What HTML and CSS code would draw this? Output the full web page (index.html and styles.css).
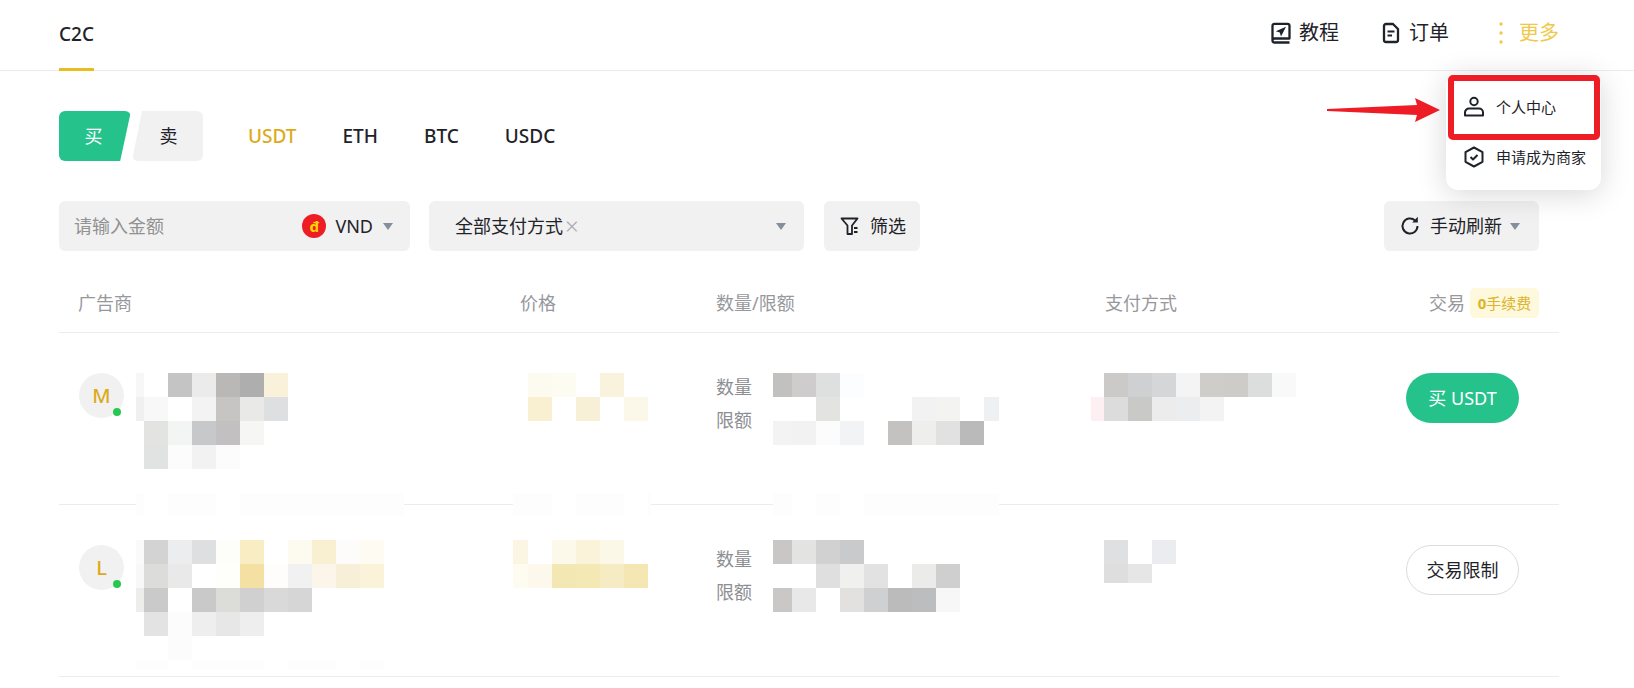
FILE: index.html
```html
<!DOCTYPE html>
<html lang="zh-CN">
<head>
<meta charset="UTF-8">
<title>C2C</title>
<link rel="stylesheet" href="styles.css">
</head>
<body>
<div class="page">
	<header class="topbar">
		<div class="topbar-title">C2C</div>
		<nav class="topbar-nav">
			<a class="nav-item">
				<svg class="icon-24" viewBox="0 0 24 24"><path class="line heavy" d="M3.500 19.500V4.800a2 2 0 0 1 2-2h13a2 2 0 0 1 2 2v12.700h-15a2 2 0 0 0-2 2zm0 0a2 2 0 0 0 2 2h15"/><path class="solid" d="M17 5.800 6.800 10.300l4 1.200 1.200 4z"/></svg>
				<span>教程</span>
			</a>
			<a class="nav-item">
				<svg class="icon-24" viewBox="0 0 24 24"><path class="line heavy" d="M5 5a2 2 0 0 1 2-2h7l5 5v11a2 2 0 0 1-2 2H7a2 2 0 0 1-2-2z"/><path class="line" d="M8.500 10.500h7M8.500 14.500h4.500"/></svg>
				<span>订单</span>
			</a>
			<a class="nav-item nav-more">
				<svg class="icon-24" viewBox="0 0 24 24"><circle class="dot" cx="12" cy="3" r="1.700"/><circle class="dot" cx="12" cy="12" r="1.700"/><circle class="dot" cx="12" cy="21" r="1.700"/></svg>
				<span>更多</span>
			</a>
		</nav>
	</header>

	<div class="trade-tabs">
		<div class="side-tabs">
			<a class="side-buy">买</a>
			<a class="side-sell">卖</a>
		</div>
		<div class="coin-tabs">
			<a class="coin-active">USDT</a>
			<a>ETH</a>
			<a>BTC</a>
			<a>USDC</a>
		</div>
	</div>

	<div class="filters">
		<div class="field field-amount">
			<span class="placeholder">请输入金额</span>
			<span class="flag">đ</span>
			<span class="currency">VND</span>
			<i class="caret"></i>
		</div>
		<div class="field field-pay">
			<span>全部支付方式</span>
			<span class="clear">×</span>
			<i class="caret caret-end"></i>
		</div>
		<div class="field field-filter">
			<svg class="icon-20" viewBox="0 0 20 20"><path class="line thin" d="M1.500 2.500h16L12 9.500v8.500H7.500V9.500z"/><path class="line thin" d="M14 12h3.500M14 16h3.500"/></svg>
			<span>筛选</span>
		</div>
		<div class="field field-refresh">
			<svg class="icon-24" viewBox="0 0 24 24"><path class="line" d="M19.500 12a7.500 7.500 0 1 1-2.400-5.500"/><path class="solid" d="M19.800 2.800v5.600h-5.600z"/></svg>
			<span>手动刷新</span>
			<i class="caret"></i>
		</div>
	</div>

	<div class="table">
		<div class="table-head">
			<div>广告商</div>
			<div>价格</div>
			<div>数量/限额</div>
			<div>支付方式</div>
			<div class="head-trade">
				<span>交易</span>
				<span class="fee-badge"><b>0</b>手续费</span>
			</div>
		</div>

		<div class="table-row">
			<div><div class="avatar">M</div></div>
			<div></div>
			<div class="amount"><div>数量</div><div>限额</div></div>
			<div></div>
			<div class="trade-cell"><a class="trade-btn trade-buy">买 USDT</a></div>
		</div>

		<div class="table-row">
			<div><div class="avatar">L</div></div>
			<div></div>
			<div class="amount"><div>数量</div><div>限额</div></div>
			<div></div>
			<div class="trade-cell"><a class="trade-btn trade-limit">交易限制</a></div>
		</div>
	</div>

	<div class="more-menu">
		<a class="menu-item">
			<svg class="icon-24" viewBox="0 0 24 24"><circle class="line" cx="12" cy="6.500" r="3.700"/><path class="line" d="M7 13.500h10a4 4 0 0 1 4 4V20.500H3v-3a4 4 0 0 1 4-4z"/></svg>
			<span>个人中心</span>
		</a>
		<a class="menu-item">
			<svg class="icon-24" viewBox="0 0 24 24"><path class="line" d="M12 2.500 20.500 7.200v9.600L12 21.500l-8.500-4.700V7.200z"/><path class="line" d="m8.500 12 2.500 2.500 4.500-4.500"/></svg>
			<span>申请成为商家</span>
		</a>
	</div>

	<!-- mosaic over the private data, plus the red marks on top of the screenshot -->
	<svg class="overlay" width="1634" height="688" viewBox="0 0 1634 688">
		<!-- row 1 advertiser -->
		<rect x="136" y="373" width="8" height="24" fill="#f7f7f7"/>
		<rect class="c" x="168" y="373" fill="#c4c4c4"/>
		<rect class="c" x="192" y="373" fill="#ebebeb"/>
		<rect class="c" x="216" y="373" fill="#b9b8b6"/>
		<rect class="c" x="240" y="373" fill="#aeaeae"/>
		<rect class="c" x="264" y="373" fill="#f9f1da"/>
		<rect x="136" y="397" width="8" height="24" fill="#f0f0f0"/>
		<rect class="c" x="144" y="397" fill="#f8f8f8"/>
		<rect class="c" x="192" y="397" fill="#f3f3f3"/>
		<rect class="c" x="216" y="397" fill="#c6c5c3"/>
		<rect class="c" x="240" y="397" fill="#e9e9e7"/>
		<rect class="c" x="264" y="397" fill="#dedfe0"/>
		<rect class="c" x="144" y="421" fill="#e3e3e1"/>
		<rect class="c" x="168" y="421" fill="#f3f5f4"/>
		<rect class="c" x="192" y="421" fill="#c7c8ca"/>
		<rect class="c" x="216" y="421" fill="#c2c0c1"/>
		<rect class="c" x="240" y="421" fill="#f6f6f4"/>
		<rect class="c" x="144" y="445" fill="#e1e3e2"/>
		<rect class="c" x="168" y="445" fill="#fcfcfc"/>
		<rect class="c" x="192" y="445" fill="#f2f2f2"/>
		<rect class="c" x="216" y="445" fill="#fbfcfb"/>
		<!-- row 1 price -->
		<rect class="c" x="528" y="373" fill="#fdfaf0"/>
		<rect class="c" x="552" y="373" fill="#fdfcf2"/>
		<rect class="c" x="600" y="373" fill="#f9f2dd"/>
		<rect class="c" x="528" y="397" fill="#f8f0d0"/>
		<rect class="c" x="576" y="397" fill="#f7f0d7"/>
		<rect class="c" x="624" y="397" fill="#fbf8e9"/>
		<!-- row 1 amount -->
		<rect x="773" y="373" width="19" height="24" fill="#c1c2c0"/>
		<rect class="c" x="792" y="373" fill="#cecccd"/>
		<rect class="c" x="816" y="373" fill="#dee0df"/>
		<rect class="c" x="840" y="373" fill="#fcfdff"/>
		<rect class="c" x="816" y="397" fill="#e3e3e1"/>
		<rect class="c" x="912" y="397" fill="#f2f2f2"/>
		<rect class="c" x="936" y="397" fill="#f3f3f1"/>
		<rect x="984" y="397" width="15" height="24" fill="#eff0f2"/>
		<rect x="773" y="421" width="19" height="24" fill="#f3f3f3"/>
		<rect class="c" x="792" y="421" fill="#f1f2f1"/>
		<rect class="c" x="816" y="421" fill="#fcfcfc"/>
		<rect class="c" x="840" y="421" fill="#f2f3f5"/>
		<rect class="c" x="888" y="421" fill="#c3c2c0"/>
		<rect class="c" x="912" y="421" fill="#eeeeec"/>
		<rect class="c" x="936" y="421" fill="#e1e1e1"/>
		<rect class="c" x="960" y="421" fill="#bababa"/>
		<!-- row 1 payment -->
		<rect class="c" x="1104" y="373" fill="#cbcac8"/>
		<rect class="c" x="1128" y="373" fill="#cfd0d2"/>
		<rect class="c" x="1152" y="373" fill="#d5d6d8"/>
		<rect class="c" x="1176" y="373" fill="#f4f4f4"/>
		<rect class="c" x="1200" y="373" fill="#cecdc9"/>
		<rect class="c" x="1224" y="373" fill="#cdccc8"/>
		<rect class="c" x="1248" y="373" fill="#dcdedd"/>
		<rect class="c" x="1272" y="373" fill="#f9f9f9"/>
		<rect x="1091" y="397" width="13" height="24" fill="#fdeff2"/>
		<rect class="c" x="1104" y="397" fill="#dcdcdc"/>
		<rect class="c" x="1128" y="397" fill="#c9c9c7"/>
		<rect class="c" x="1152" y="397" fill="#ececec"/>
		<rect class="c" x="1176" y="397" fill="#ecedef"/>
		<rect class="c" x="1200" y="397" fill="#f3f3f3"/>
		<!-- faint strip over the row 1 divider -->
		<rect x="136" y="493" width="8" height="23" fill="#fdfdfd"/>
		<rect x="144" y="493" width="24" height="23" fill="#fff"/>
		<rect x="168" y="493" width="48" height="23" fill="#fdfdfd"/>
		<rect x="216" y="493" width="24" height="23" fill="#fff"/>
		<rect x="240" y="493" width="164" height="23" fill="#fdfdfd"/>
		<rect x="513" y="493" width="39" height="23" fill="#fdfdfd"/>
		<rect x="552" y="493" width="24" height="23" fill="#fff"/>
		<rect x="576" y="493" width="48" height="23" fill="#fdfdfd"/>
		<rect x="624" y="493" width="24" height="23" fill="#fff"/>
		<rect x="648" y="493" width="3" height="23" fill="#fdfdfd"/>
		<rect x="773" y="493" width="19" height="23" fill="#fdfdfd"/>
		<rect x="792" y="493" width="24" height="23" fill="#fff"/>
		<rect x="816" y="493" width="24" height="23" fill="#fdfdfd"/>
		<rect x="840" y="493" width="24" height="23" fill="#fff"/>
		<rect x="864" y="493" width="135" height="23" fill="#fdfdfd"/>
		<!-- row 2 advertiser -->
		<rect x="136" y="540" width="8" height="24" fill="#fafafa"/>
		<rect class="c" x="144" y="540" fill="#d3d3d3"/>
		<rect class="c" x="168" y="540" fill="#ecedef"/>
		<rect class="c" x="192" y="540" fill="#dedfe1"/>
		<rect class="c" x="216" y="540" fill="#fdfef9"/>
		<rect class="c" x="240" y="540" fill="#f8edc3"/>
		<rect class="c" x="288" y="540" fill="#fdfaf0"/>
		<rect class="c" x="312" y="540" fill="#f8f0d0"/>
		<rect class="c" x="336" y="540" fill="#fefcfa"/>
		<rect class="c" x="360" y="540" fill="#fefcf2"/>
		<rect x="136" y="564" width="8" height="24" fill="#f8f8f8"/>
		<rect class="c" x="144" y="564" fill="#dcdcda"/>
		<rect class="c" x="168" y="564" fill="#e9e9e9"/>
		<rect class="c" x="216" y="564" fill="#fefffb"/>
		<rect class="c" x="240" y="564" fill="#f4e0a3"/>
		<rect class="c" x="264" y="564" fill="#fefdfb"/>
		<rect class="c" x="288" y="564" fill="#f1f1f1"/>
		<rect class="c" x="312" y="564" fill="#fcf5ea"/>
		<rect class="c" x="336" y="564" fill="#f7efd7"/>
		<rect class="c" x="360" y="564" fill="#faf3d9"/>
		<rect x="136" y="588" width="8" height="24" fill="#ededeb"/>
		<rect class="c" x="144" y="588" fill="#cacaca"/>
		<rect class="c" x="192" y="588" fill="#c9c9c9"/>
		<rect class="c" x="216" y="588" fill="#dcdcd8"/>
		<rect class="c" x="240" y="588" fill="#d0d0d0"/>
		<rect class="c" x="264" y="588" fill="#d9d9d9"/>
		<rect class="c" x="288" y="588" fill="#d6d6d6"/>
		<rect class="c" x="144" y="612" fill="#e3e3e3"/>
		<rect class="c" x="168" y="612" fill="#fcfcfc"/>
		<rect class="c" x="192" y="612" fill="#eeeeee"/>
		<rect class="c" x="216" y="612" fill="#e7e7e7"/>
		<rect class="c" x="240" y="612" fill="#eeeeee"/>
		<rect class="c" x="168" y="636" fill="#fcfcfc"/>
		<rect x="136" y="660" width="32" height="9" fill="#fdfdfd"/>
		<rect x="192" y="660" width="72" height="9" fill="#fdfdfd"/>
		<rect x="288" y="660" width="48" height="9" fill="#fdfdfd"/>
		<rect x="360" y="660" width="24" height="9" fill="#fdfdfd"/>
		<!-- row 2 price -->
		<rect x="513" y="540" width="15" height="24" fill="#fbf5e3"/>
		<rect class="c" x="552" y="540" fill="#fcf8ea"/>
		<rect class="c" x="576" y="540" fill="#faf3d9"/>
		<rect class="c" x="600" y="540" fill="#fbf8e7"/>
		<rect x="513" y="564" width="15" height="24" fill="#fefcf0"/>
		<rect class="c" x="528" y="564" fill="#fcf9ec"/>
		<rect class="c" x="552" y="564" fill="#f3e7b3"/>
		<rect class="c" x="576" y="564" fill="#f4e8b5"/>
		<rect class="c" x="600" y="564" fill="#f5ecc4"/>
		<rect class="c" x="624" y="564" fill="#f4e7b3"/>
		<!-- row 2 amount -->
		<rect x="773" y="540" width="19" height="24" fill="#c8c7c5"/>
		<rect class="c" x="792" y="540" fill="#e3e3e1"/>
		<rect class="c" x="816" y="540" fill="#d1d1d1"/>
		<rect class="c" x="840" y="540" fill="#c9cacc"/>
		<rect class="c" x="816" y="564" fill="#dfdfdf"/>
		<rect class="c" x="840" y="564" fill="#f0f0ee"/>
		<rect class="c" x="864" y="564" fill="#e2e2e2"/>
		<rect class="c" x="912" y="564" fill="#ebebe9"/>
		<rect class="c" x="936" y="564" fill="#cfcfcf"/>
		<rect x="773" y="588" width="19" height="24" fill="#c9c8c6"/>
		<rect class="c" x="792" y="588" fill="#e8e8e8"/>
		<rect class="c" x="840" y="588" fill="#e2e1df"/>
		<rect class="c" x="864" y="588" fill="#ced0d2"/>
		<rect class="c" x="888" y="588" fill="#bcbbbb"/>
		<rect class="c" x="912" y="588" fill="#bcbdbf"/>
		<rect class="c" x="936" y="588" fill="#f7f7f7"/>
		<!-- row 2 payment -->
		<rect class="c" x="1104" y="540" fill="#dfe0e2"/>
		<rect class="c" x="1152" y="540" fill="#ebecf0"/>
		<rect x="1104" y="564" width="24" height="19" fill="#dedede"/>
		<rect x="1128" y="564" width="24" height="19" fill="#e6e6e6"/>
		<!-- red marks -->
		<rect class="mark-frame" x="1451" y="78" width="146" height="59" rx="2"/>
		<polygon class="mark-arrow" points="1327,109 1417,105 1415,98 1440,110 1415,122 1417,115 1327,111"/>
	</svg>
</div>
</body>
</html>
```
FILE: styles.css
```css
* {
	box-sizing: border-box;
}

html,
body {
	margin: 0;
	padding: 0;
	background: #fff;
}

body {
	font-family: "Noto Sans", "Noto Sans CJK SC", sans-serif;
	font-size: 18px;
	line-height: 24px;
	color: #1e2329;
}

.page {
	position: relative;
	width: 1634px;
	height: 688px;
	overflow: hidden;
}

/* icons */
.icon-24 {
	width: 24px;
	height: 24px;
	flex: none;
}
.icon-20 {
	width: 20px;
	height: 20px;
	flex: none;
}
.line {
	fill: none;
	stroke: #1e2329;
	stroke-width: 2;
	stroke-linejoin: round;
}
.thin {
	stroke-width: 1.8;
}
.heavy {
	stroke-width: 2.3;
}
.solid {
	fill: #1e2329;
}
.dot {
	fill: #f0c94a;
}

/* top bar */
.topbar {
	display: flex;
	justify-content: space-between;
	align-items: center;
	height: 71px;
	padding: 0 75px 0 59px;
	border-bottom: 1px solid #eaecef;
}
.topbar-title {
	display: flex;
	align-items: center;
	align-self: flex-start;
	height: 71px;
	border-bottom: 3px solid #e8bd1e;
	font-size: 19px;
	font-weight: 500;
}
.topbar-nav {
	display: flex;
	gap: 40px;
	margin-bottom: 4px;
	font-size: 20px;
}
.nav-item {
	display: flex;
	align-items: center;
	gap: 6px;
}
.nav-more {
	color: #f0c94a;
}

/* buy / sell and coin */
.trade-tabs {
	display: flex;
	align-items: center;
	margin-top: 40px;
	padding-left: 59px;
}
.side-tabs {
	display: flex;
	gap: 1px;
}
.side-buy,
.side-sell {
	display: block;
	height: 50px;
	line-height: 50px;
	text-align: center;
	border-radius: 6px;
}
.side-buy {
	width: 72px;
	padding-right: 3px;
	background: #26c28c;
	color: #fff;
	clip-path: polygon(0 0, 100% 0, 85% 100%, 0 100%);
}
.side-sell {
	width: 71px;
	padding-left: 2px;
	background: #f1f1f1;
	clip-path: polygon(14% 0, 100% 0, 100% 100%, 0 100%);
}
.coin-tabs {
	display: flex;
	gap: 46px;
	margin-left: 45px;
	font-size: 19px;
	font-weight: 500;
}
.coin-active {
	color: #dcab1a;
}

/* filter bar */
.filters {
	display: flex;
	gap: 19px;
	margin-top: 40px;
	padding: 0 95px 0 59px;
}
.field {
	display: flex;
	align-items: center;
	height: 50px;
	background: #f1f1f1;
	border-radius: 6px;
}
.field-amount {
	width: 351px;
	padding: 0 17px 0 15px;
}
.placeholder {
	flex: 1;
	color: #929292;
}
.flag {
	flex: none;
	width: 24px;
	height: 24px;
	margin-right: 9px;
	border-radius: 50%;
	background: #ee1c25;
	color: #ffd800;
	font-size: 15px;
	font-weight: 700;
	line-height: 24px;
	text-align: center;
}
.currency {
	margin-right: 10px;
}
.caret {
	flex: none;
	width: 0;
	height: 0;
	border-left: 5px solid transparent;
	border-right: 5px solid transparent;
	border-top: 7px solid #848e9c;
}
.caret-end {
	margin-left: auto;
}
.field-pay {
	width: 375px;
	padding: 0 18px 0 26px;
}
.clear {
	margin-left: 2px;
	color: #aaa;
	font-size: 24px;
	font-weight: 300;
}
.field-filter {
	width: 96px;
	margin-left: 1px;
	padding-left: 16px;
	gap: 10px;
}
.field-refresh {
	width: 155px;
	margin-left: auto;
	padding-left: 14px;
	gap: 8px;
}

/* table */
.table {
	margin: 0 75px 0 59px;
}
.table-head,
.table-row {
	display: grid;
	border-bottom: 1px solid #eaecef;
}
.table-head {
	align-items: center;
	padding: 37px 20px 14px 19px;
	grid-template-columns: 442px 196px 389px 1fr auto;
	color: #96989c;
}
.head-trade {
	display: flex;
	align-items: center;
	gap: 5px;
	padding-left: 1px;
}
.fee-badge {
	width: 69px;
	height: 30px;
	background: #fef9dc;
	border-radius: 5px;
	color: #dcb42a;
	font-size: 15px;
	line-height: 30px;
	text-align: center;
}
.table-row {
	height: 172px;
	padding: 40px 40px 0 20px;
	grid-template-columns: 441px 196px 389px 1fr auto;
}
.avatar {
	position: relative;
	width: 45px;
	height: 45px;
	border-radius: 50%;
	background: #f1f1f1;
	color: #dcab1a;
	font-size: 20px;
	font-weight: 500;
	line-height: 45px;
	text-align: center;
}
.avatar::after {
	content: "";
	position: absolute;
	right: 3px;
	bottom: 2px;
	width: 8px;
	height: 8px;
	border-radius: 50%;
	background: #28c850;
}
.amount {
	margin-top: -2px;
	line-height: 33px;
	color: #8c8e92;
}
.trade-btn {
	display: block;
	width: 113px;
	height: 50px;
	border-radius: 25px;
	line-height: 50px;
	text-align: center;
}
.trade-buy {
	background: #26c28c;
	color: #fff;
}
.trade-limit {
	border: 1px solid #dcdcdc;
	line-height: 48px;
}

/* dropdown under "more" */
.more-menu {
	position: absolute;
	top: 74px;
	right: 33px;
	width: 155px;
	height: 116px;
	padding-top: 8px;
	background: #fff;
	border-radius: 12px;
	box-shadow: 0 4px 30px rgba(0, 0, 0, 0.16);
	font-size: 15px;
}
.menu-item {
	display: flex;
	align-items: center;
	gap: 10px;
	height: 50px;
	padding-left: 16px;
}

/* mosaic and red marks */
.overlay {
	position: absolute;
	top: 0;
	left: 0;
	pointer-events: none;
}
.c {
	width: 24px;
	height: 24px;
}
.mark-frame {
	fill: none;
	stroke: #ee1c25;
	stroke-width: 6;
}
.mark-arrow {
	fill: #ee1c25;
}
```
